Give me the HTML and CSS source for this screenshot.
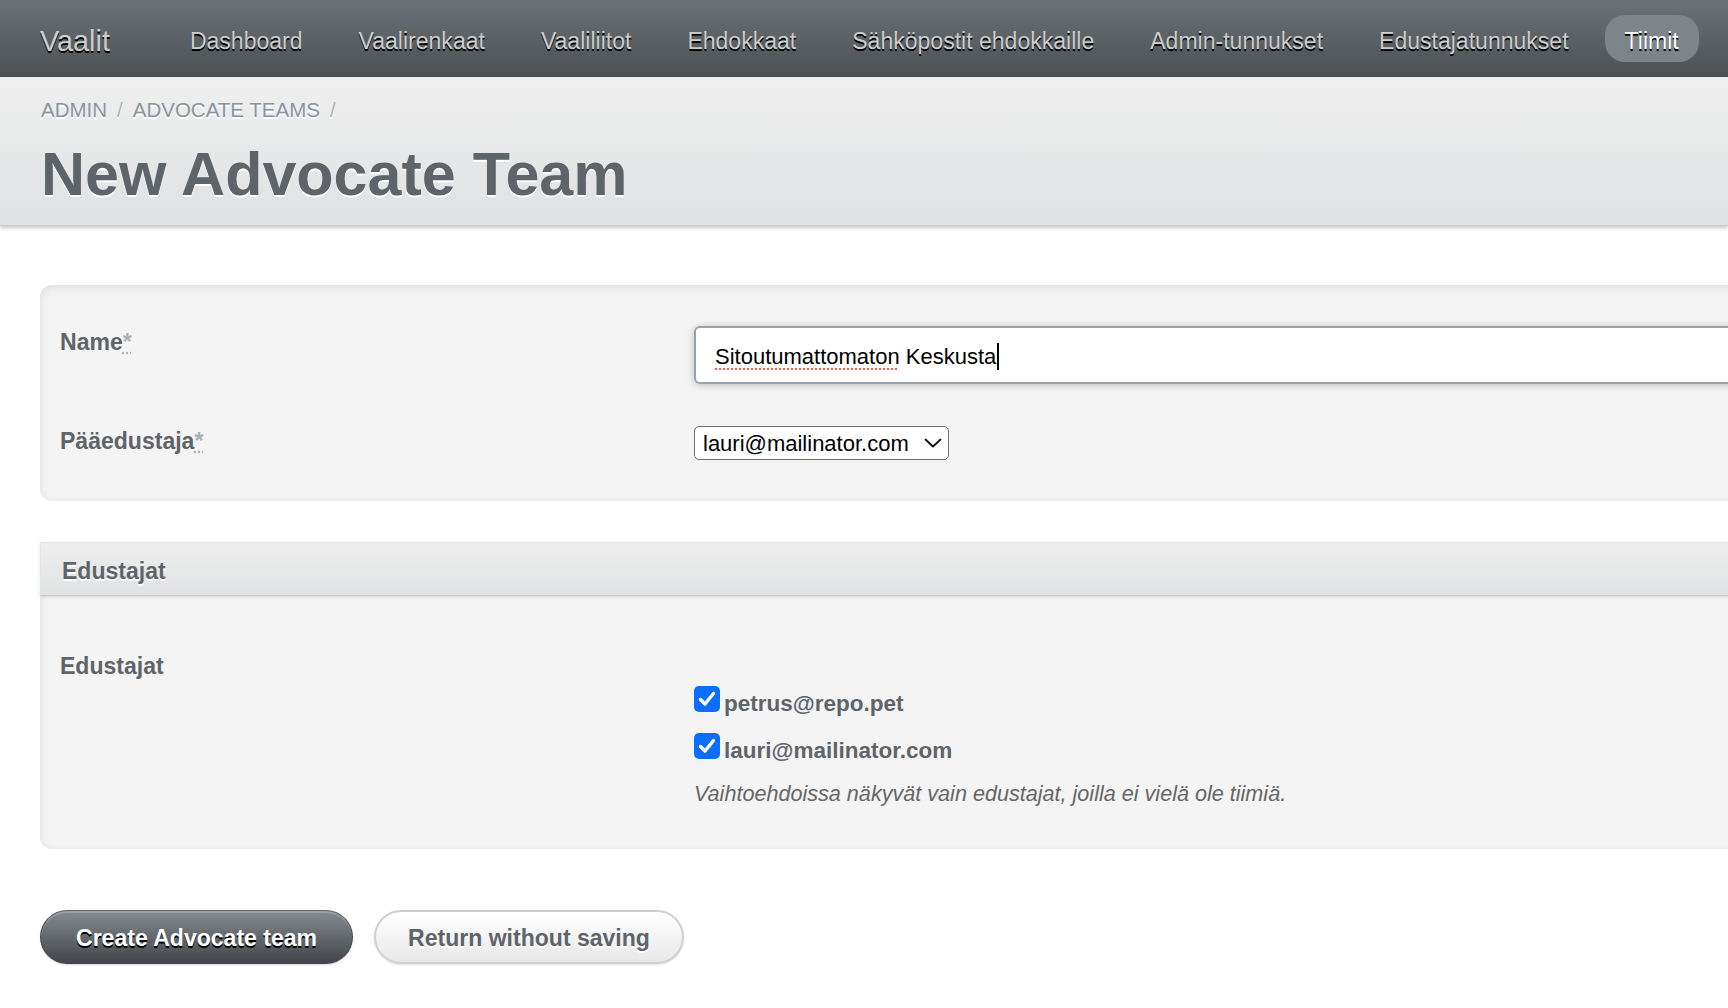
FILE: index.html
```html
<!DOCTYPE html>
<html lang="fi">
<head>
<meta charset="utf-8">
<title>New Advocate Team | Vaalit</title>
<link rel="stylesheet" href="styles.css">
</head>
<body>
<header class="site-header">
  <h1 class="site-title">Vaalit</h1>
  <ul class="tabs">
    <li><a href="#">Dashboard</a></li>
    <li><a href="#">Vaalirenkaat</a></li>
    <li><a href="#">Vaaliliitot</a></li>
    <li><a href="#">Ehdokkaat</a></li>
    <li><a href="#">Sähköpostit ehdokkaille</a></li>
    <li><a href="#">Admin-tunnukset</a></li>
    <li><a href="#">Edustajatunnukset</a></li>
    <li class="current"><a href="#">Tiimit</a></li>
  </ul>
</header>

<div class="title-bar">
  <nav class="breadcrumb">
    <a href="#">ADMIN</a><span class="sep">/</span><a href="#">ADVOCATE TEAMS</a><span class="sep">/</span>
  </nav>
  <h2 class="page-title">New Advocate Team</h2>
</div>

<main class="content">
  <form class="form" onsubmit="return false">
    <section class="panel panel-main">
      <ol class="fields">
        <li class="field">
          <label class="field-label">Name<abbr title="required">*</abbr></label>
          <div class="text-input"><span class="misspelled">Sitoutumattomaton</span> Keskusta<span class="caret"></span></div>
        </li>
        <li class="field field-select">
          <label class="field-label">Pääedustaja<abbr title="required">*</abbr></label>
          <div class="select-wrap">
            <select class="select">
              <option>lauri@mailinator.com</option>
              <option>petrus@repo.pet</option>
            </select>
            <svg class="chevron" width="18" height="10" viewBox="0 0 18 10" aria-hidden="true"><path d="M1.5 1.5 L9 8.5 L16.5 1.5" fill="none" stroke="#111" stroke-width="1.8" stroke-linecap="round" stroke-linejoin="round"/></svg>
          </div>
        </li>
      </ol>
    </section>

    <section class="panel panel-legend">
      <div class="legend">Edustajat</div>
      <ol class="fields">
        <li class="field">
          <span class="field-label">Edustajat</span>
          <div class="choices">
            <label class="choice"><span class="checkbox"><svg width="26" height="26" viewBox="0 0 26 26" aria-hidden="true"><path d="M6.5 13.5 L11 18 L19.5 7.5" fill="none" stroke="#fff" stroke-width="3.4" stroke-linecap="round" stroke-linejoin="round"/></svg></span>petrus@repo.pet</label>
            <label class="choice"><span class="checkbox"><svg width="26" height="26" viewBox="0 0 26 26" aria-hidden="true"><path d="M6.5 13.5 L11 18 L19.5 7.5" fill="none" stroke="#fff" stroke-width="3.4" stroke-linecap="round" stroke-linejoin="round"/></svg></span>lauri@mailinator.com</label>
            <p class="hint">Vaihtoehdoissa näkyvät vain edustajat, joilla ei vielä ole tiimiä.</p>
          </div>
        </li>
      </ol>
    </section>

    <div class="actions">
      <button class="btn btn-dark" type="submit">Create Advocate team</button>
      <a class="btn btn-light" href="#">Return without saving</a>
    </div>
  </form>
</main>
</body>
</html>
```

FILE: styles.css
```css
html, body {
  overflow: hidden;
}

body {
  margin: 0;
  background: #fff;
  color: #323537;
  font-family: "Liberation Sans", Arial, Helvetica, sans-serif;
  font-size: 23.04px;
  line-height: 1.5;
}

/* ---------- header ---------- */
.site-header {
  display: flex;
  align-items: center;
  height: 77px;
  box-sizing: border-box;
  padding: 0 40px;
  background: linear-gradient(180deg, #6b7176 0%, #4c5155 100%);
  border-bottom: 1px solid #464a4e;
  text-shadow: 0 2px 0 #000;
}

.site-title {
  margin: 0 60px 0 0;
  padding-top: 6px;
  font-size: 28.8px;
  font-weight: normal;
  line-height: 28.8px;
  color: #cdcdcd;
  white-space: nowrap;
}

.tabs {
  display: flex;
  gap: 16px;
  margin: 0;
  padding: 0;
  list-style: none;
  white-space: nowrap;
}

.tabs a {
  display: block;
  padding: 13px 20px 7px;
  line-height: 27px;
  border-radius: 20px;
  color: #cdcdcd;
  text-decoration: none;
}

.tabs .current a {
  background: #7d848a;
  color: #fff;
}

/* ---------- title bar ---------- */
.title-bar {
  position: relative;
  padding: 22px 40px 21px 41px;
  background: linear-gradient(180deg, #efefef 0%, #dfe1e2 100%);
  border-bottom: 1px solid #cdcdcd;
  box-shadow: 0 2px 4px rgba(0, 0, 0, 0.22);
  text-shadow: 0 2px 0 #fff;
}

.breadcrumb {
  margin-bottom: 24px;
  font-size: 20.5px;
  line-height: 21px;
  text-transform: uppercase;
}

.breadcrumb a {
  color: #8a949e;
  text-decoration: none;
}

.breadcrumb .sep {
  margin: 0 10px;
  color: #aab2ba;
}

.page-title {
  margin: 0;
  font-size: 61px;
  line-height: 60px;
  font-weight: bold;
  color: #5e6469;
}

/* ---------- content ---------- */
.content {
  margin-right: -400px;
  padding: 59px 0 60px 40px;
}

.panel {
  background: #f4f4f4;
  border-radius: 12px;
  box-shadow: inset 0 2px 8px #dddddd;
}

.panel-main {
  margin-bottom: 41px;
  padding: 20px 0 21px;
}

.panel-legend {
  margin-bottom: 61px;
  padding: 0 0 18px;
}

.legend {
  padding: 10px 20px 6px 21px;
  line-height: 36px;
  font-weight: bold;
  color: #5e6469;
  background: linear-gradient(180deg, #efefef 0%, #dfe1e2 100%);
  border: 1px solid #e3e3e3;
  border-bottom: 1px solid #c9c9c9;
  box-shadow: 0 1px 3px rgba(0, 0, 0, 0.12);
  text-shadow: 0 2px 0 #fff;
}

.panel-legend .fields {
  padding-top: 33px;
}

.fields {
  margin: 0;
  padding: 0;
  list-style: none;
}

.field {
  display: flex;
  align-items: flex-start;
  padding: 20px;
}

.field-label {
  flex: none;
  width: 634px;
  font-weight: bold;
  line-height: 34.5px;
  color: #5e6469;
}

.field-label abbr {
  color: #a9afb4;
  text-decoration: underline dotted #a9afb4;
}

.text-input {
  flex: 1;
  margin-top: 1px;
  height: 58px;
  box-sizing: border-box;
  padding: 15px 19px 13px;
  background: #fff;
  border: 2px solid #9aa3ab;
  border-radius: 6px;
  box-shadow: 0 1px 7px rgba(110, 120, 130, 0.45);
  font-size: 22px;
  line-height: 26px;
  color: #000;
  white-space: nowrap;
}

.misspelled {
  text-decoration: underline dotted #f25858;
  text-decoration-thickness: 2px;
  text-underline-offset: 4px;
}

.caret {
  display: inline-block;
  width: 2px;
  height: 27px;
  margin-left: 1px;
  background: #000;
  vertical-align: -6px;
}

.select-wrap {
  position: relative;
  margin-top: 2px;
  width: 255px;
}

.select {
  display: block;
  width: 255px;
  height: 34px;
  box-sizing: border-box;
  padding: 0 30px 0 8px;
  -webkit-appearance: none;
  appearance: none;
  background: #fff;
  border: 1px solid #6f6f6f;
  border-radius: 5px;
  font-family: inherit;
  font-size: 22px;
  color: #000;
}

.chevron {
  position: absolute;
  right: 7px;
  top: 12px;
  pointer-events: none;
}

.choices {
  padding-top: 31px;
}

.choice {
  display: block;
  font-size: 22.5px;
  font-weight: bold;
  line-height: 47px;
  color: #5e6469;
  white-space: nowrap;
}

.checkbox {
  display: inline-block;
  width: 26px;
  height: 26px;
  margin-right: 4px;
  border-radius: 5px;
  background: #0b6efd;
  vertical-align: -1px;
}

.checkbox svg {
  display: block;
}

.hint {
  margin: 4px 0 0;
  font-size: 21.6px;
  font-style: italic;
  line-height: 32.8px;
  color: #666;
  white-space: nowrap;
}

/* ---------- buttons ---------- */
.actions {
  display: flex;
  gap: 21px;
}

.btn {
  display: inline-block;
  padding: 14px 35px 12px;
  border-radius: 200px;
  font-family: inherit;
  font-size: 23.04px;
  font-weight: bold;
  line-height: 26px;
  text-decoration: none;
  cursor: pointer;
}

.btn-dark {
  background: linear-gradient(180deg, #858b91 0%, #42464a 100%);
  border: 1px solid #43484c;
  border-top-color: #5f666c;
  box-shadow: inset 0 2px 0 rgba(255, 255, 255, 0.18), 0 1px 2px rgba(0, 0, 0, 0.15);
  color: #fff;
  text-shadow: 0 2px 0 #000;
}

.btn-light {
  background: linear-gradient(180deg, #ffffff 0%, #e8e8e8 100%);
  border: 2px solid #cfcfcf;
  padding: 13px 32px 11px;
  box-shadow: 0 1px 2px rgba(0, 0, 0, 0.12);
  color: #5e6469;
  text-shadow: 0 2px 0 #fff;
}
```
